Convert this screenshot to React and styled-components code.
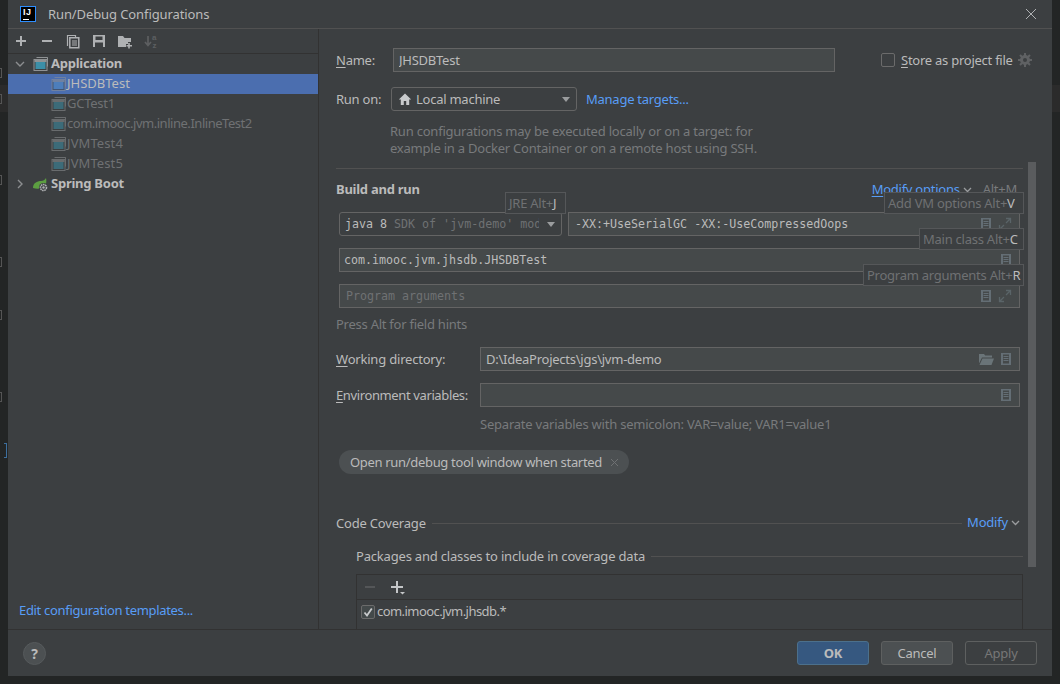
import React from "react";
import styled, { createGlobalStyle } from "styled-components";

const UI = `"Noto Sans", "Open Sans", "Liberation Sans", sans-serif`;
const MONO = `"DejaVu Sans Mono", "Liberation Mono", monospace`;

const Global = createGlobalStyle`
  html, body { margin: 0; padding: 0; background: #232525; overflow: hidden; }
  * { box-sizing: border-box; }
`;

const Screen = styled.div`
  position: relative;
  width: 1060px;
  height: 684px;
  padding: 0 8px 8px;
  background: #232525;
  font: 13px/17px ${UI};
  letter-spacing: -0.25px;
  color: #bbbbbb;
  overflow: hidden;
`;
const CaretLine = styled.i`
  position: absolute;
  left: 0;
  right: 0;
  top: 85px;
  height: 27px;
  background: #2b2b2b;
`;
const GutterMark = styled.i`
  position: absolute;
  left: 0;
  top: ${(p) => p.$top}px;
  width: 2px;
  height: 10px;
  border: 1px solid #555;
  border-left: 0;
`;
const Brace = styled.i`
  position: absolute;
  left: 4px;
  top: 443px;
  width: 3px;
  height: 15px;
  border: 1px solid #3d6f9e;
  border-left: 0;
`;
const Dialog = styled.div`
  position: relative;
  width: 1044px;
  height: 676px;
  display: flex;
  flex-direction: column;
  background: #3c3f41;
`;
const TitleBar = styled.header`
  height: 29px;
  flex: none;
  display: flex;
  align-items: center;
  padding-left: 12px;
  border-bottom: 1px solid #515151;
`;
const Logo = styled.div`
  position: relative;
  width: 16px;
  height: 16px;
  background: #000;
  border: 1px solid #2f8fff;
  color: #fff;
  font: 700 9px/10px "Liberation Sans", sans-serif;
  padding-left: 2px;
  letter-spacing: 0.5px;
  &::after {
    content: "";
    position: absolute;
    left: 2px;
    bottom: 1px;
    width: 6px;
    height: 1px;
    background: #fff;
  }
`;
const Title = styled.div`
  margin-left: 12px;
  color: #bbbbbb;
  letter-spacing: -0.1px;
`;
const CloseBtn = styled.div`
  margin-left: auto;
  margin-right: 15px;
  display: flex;
  color: #afb1b3;
`;
const Main = styled.div`
  flex: 1;
  min-height: 0;
  display: flex;
`;
const Sidebar = styled.aside`
  width: 311px;
  flex: none;
  display: flex;
  flex-direction: column;
  border-right: 1px solid #323232;
`;
const Toolbar = styled.div`
  height: 25px;
  flex: none;
  display: flex;
  align-items: center;
  gap: 10px;
  padding-left: 5px;
  border-bottom: 1px solid #323232;
  color: #afb1b3;
`;
const ToolIcon = styled.span`
  display: flex;
  width: 16px;
  height: 16px;
  color: ${(p) => (p.$off ? "#5d5f61" : p.$bright ? "#c4c6c8" : "#afb1b3")};
`;
const Tree = styled.div`
  flex: 1;
  min-height: 0;
`;
const Node = styled.div`
  height: 20px;
  display: flex;
  align-items: center;
  padding-left: ${(p) => (p.$child ? 43 : 7)}px;
  padding-bottom: 1px;
  background: ${(p) => (p.$selected ? "#4b6eaf" : "transparent")};
  color: ${(p) => (p.$selected ? "#bbbbbb" : p.$child ? "#6f7173" : "#bbbbbb")};
  font-weight: ${(p) => (p.$child ? 400 : 700)};
  letter-spacing: ${(p) => p.$ls ?? -0.25}px;
  white-space: nowrap;
`;
const Twisty = styled.span`
  width: 18px;
  display: flex;
  color: #8c8e90;
`;
const NodeIcon = styled.span`
  width: 16px;
  height: 16px;
  display: flex;
  margin-right: ${(p) => (p.$dim ? 0 : 2)}px;
  opacity: ${(p) => (p.$dim ? 0.55 : 1)};
`;
const Link = styled.span`
  color: #589df6;
`;
const TemplatesLink = styled(Link)`
  padding: 0 0 10px 11px;
  letter-spacing: -0.32px;
`;
const Content = styled.section`
  position: relative;
  flex: 1;
  min-width: 0;
  overflow: hidden;
  padding: 19px 29px 0 17px;
`;
const Thumb = styled.div`
  position: absolute;
  right: 16px;
  top: 133px;
  width: 8px;
  height: 405px;
  background: #5a5c5e;
`;
const Row = styled.div`
  display: flex;
  align-items: center;
  height: 24px;
  margin-top: ${(p) => p.$mt || 0}px;
  margin-left: ${(p) => p.$ml || 0}px;
`;
const Label = styled.label`
  flex: none;
  width: ${(p) => p.$w}px;
  color: #bbbbbb;
  white-space: nowrap;
  letter-spacing: ${(p) => p.$ls ?? -0.25}px;
`;
const Mn = styled.span`
  text-decoration: underline;
  text-underline-offset: 2px;
`;
const Field = styled.div`
  height: 24px;
  display: flex;
  align-items: center;
  gap: 6px;
  flex: ${(p) => (p.$w ? "none" : 1)};
  min-width: 0;
  width: ${(p) => (p.$w ? `${p.$w}px` : "auto")};
  padding: 0 7px 0 ${(p) => p.$pl || 5}px;
  background: #45494a;
  border: 1px solid #646464;
  color: #bbbbbb;
  white-space: nowrap;
`;
const FieldText = styled.span`
  flex: 1;
  min-width: 0;
  overflow: hidden;
  font-family: ${(p) => (p.$mono ? MONO : UI)};
  font-size: ${(p) => (p.$mono ? "11.65px" : "13px")};
  letter-spacing: ${(p) => (p.$mono ? "0" : "-0.25px")};
  padding-top: ${(p) => (p.$mono ? 1 : 0)}px;
  color: ${(p) => (p.$placeholder ? "#6f7173" : "#bbbbbb")};
`;
const Select = styled.div`
  flex: none;
  width: ${(p) => p.$w}px;
  height: 24px;
  display: flex;
  align-items: center;
  padding: 0 6px 0 ${(p) => p.$pl || 6}px;
  background: #3c3f41;
  border: 1px solid #646464;
  border-radius: 3px;
  white-space: nowrap;
  overflow: hidden;
`;
const SelectText = styled.span`
  flex: 1;
  min-width: 0;
  display: flex;
  align-items: center;
  gap: 4px;
  overflow: hidden;
`;
const SelectMono = styled.span`
  flex: 1;
  min-width: 0;
  overflow: hidden;
  padding-top: 1px;
  font-family: ${MONO};
  font-size: 11.65px;
  letter-spacing: 0;
`;
const Muted = styled.span`
  color: #6f7173;
`;
const ArrowDown = styled.span`
  flex: none;
  width: 0;
  height: 0;
  margin-left: 8px;
  border-left: 4px solid transparent;
  border-right: 4px solid transparent;
  border-top: 5px solid #9a9c9e;
`;
const ManageLink = styled(Link)`
  margin-left: 9px;
`;
const Hint = styled.div`
  color: #787a7c;
  margin-top: ${(p) => p.$mt || 0}px;
  margin-left: ${(p) => p.$ml || 0}px;
  letter-spacing: ${(p) => p.$ls ?? -0.22}px;
`;
const Separator = styled.hr`
  margin: 11px 0 0;
  border: 0;
  height: 1px;
  background: #515151;
`;
const Heading = styled.div`
  height: 20px;
  margin-top: 10px;
  display: flex;
  align-items: center;
  font-weight: 700;
  color: #bbbbbb;
`;
const ModifyOptions = styled(Link)`
  margin-left: auto;
  font-weight: 400;
  display: flex;
  align-items: center;
  gap: 3px;
  white-space: pre;
`;
const Shortcut = styled.span`
  margin-left: 11px;
  margin-right: 6px;
  color: #787a7c;
  font-weight: 400;
`;
const FieldsGrid = styled(Row)`
  gap: 6px;
  width: 681px;
`;
const WideField = styled(Field)`
  flex: none;
  width: 540px;
`;
const Chip = styled.div`
  width: 290px;
  height: 24px;
  margin: 17px 0 0 3px;
  padding: 0 10px 0 11px;
  display: flex;
  align-items: center;
  justify-content: space-between;
  background: #4c5052;
  border-radius: 12px;
  color: #bbbbbb;
  white-space: nowrap;
  letter-spacing: -0.32px;
`;
const GroupTitle = styled.div`
  height: 18px;
  display: flex;
  align-items: center;
  gap: 6px;
  margin-top: ${(p) => p.$mt}px;
  margin-left: ${(p) => p.$ml || 0}px;
  white-space: nowrap;
  letter-spacing: -0.19px;
`;
const GroupLine = styled.span`
  flex: 1;
  height: 1px;
  background: #515151;
`;
const ModifyLink = styled(Link)`
  display: flex;
  align-items: center;
  gap: 3px;
  margin-right: 3px;
  margin-left: -1px;
  margin-top: -1px;
`;
const Table = styled.div`
  margin: 9px 0 0 20px;
  height: 120px;
  border: 1px solid #323232;
`;
const TableBar = styled.div`
  height: 25px;
  display: flex;
  align-items: center;
  gap: 11px;
  padding-left: 5px;
  border-bottom: 1px solid #323232;
`;
const TableRow = styled.div`
  height: 23px;
  display: flex;
  align-items: center;
  gap: 2px;
  padding-left: 4px;
  letter-spacing: -0.55px;
`;
const CheckBox = styled.span`
  width: 14px;
  height: 14px;
  flex: none;
  display: flex;
  align-items: center;
  justify-content: center;
  background: ${(p) => (p.$checked ? "#43494a" : "#3c3f41")};
  border: 1px solid #6b6b6b;
  border-radius: 2px;
`;
const StoreCheck = styled(CheckBox)`
  margin-left: 46px;
  margin-right: 6px;
`;
const StoreText = styled.span`
  flex: none;
  white-space: nowrap;
`;
const Gear = styled.span`
  display: flex;
  flex: none;
  margin-left: 5px;
  color: #5f6163;
`;
const KeyTip = styled.div`
  position: absolute;
  z-index: 3;
  left: ${(p) => p.$left}px;
  top: ${(p) => p.$top}px;
  width: ${(p) => p.$w}px;
  height: 22px;
  padding-left: 3px;
  line-height: 20px;
  background: #3c3f41;
  border: 1px solid #555759;
  color: #6f7173;
  white-space: nowrap;
  overflow: hidden;
`;
const KeyLetter = styled.span`
  color: #bbbbbb;
`;
const Footer = styled.footer`
  height: 47px;
  flex: none;
  display: flex;
  align-items: center;
  padding: 0 15px 0 15px;
  border-top: 1px solid #323232;
`;
const HelpBtn = styled.div`
  width: 23px;
  height: 23px;
  display: flex;
  align-items: center;
  justify-content: center;
  border-radius: 50%;
  background: #4c5052;
  border: 1px solid #565a5c;
  color: #bbbbbb;
  font-weight: 700;
  font-size: 14px;
`;
const Buttons = styled.div`
  margin-left: auto;
  display: flex;
  gap: 12px;
`;
const Button = styled.div`
  width: 72px;
  height: 24px;
  display: flex;
  align-items: center;
  justify-content: center;
  border-radius: 3px;
  border: 1px solid ${(p) => (p.$primary ? "#4c708c" : "#5e6060")};
  background: ${(p) => (p.$primary ? "#365880" : p.$disabled ? "transparent" : "#4c5052")};
  color: ${(p) => (p.$disabled ? "#777777" : "#bbbbbb")};
  font-weight: ${(p) => (p.$primary ? 700 : 400)};
`;

const Plus = () => (
  <svg width="16" height="16" viewBox="0 0 16 16"><path d="M8 3v10M3 8h10" stroke="currentColor" strokeWidth="2" /></svg>
);
const Minus = ({ w = 2 }) => (
  <svg width="16" height="16" viewBox="0 0 16 16"><path d="M3 8h10" stroke="currentColor" strokeWidth={w} /></svg>
);
const Copy = () => (
  <svg width="16" height="16" viewBox="0 0 16 16" fill="none" stroke="currentColor">
    <path d="M3 12.5h-.5v-10h8V5" strokeWidth="1.2" />
    <path d="M4.8 4.8h9v10h-9z" strokeWidth="1.5" />
    <path d="M7 8h5M7 10h5M7 12h5" strokeWidth="1.1" />
  </svg>
);
const Save = () => (
  <svg width="16" height="16" viewBox="0 0 16 16">
    <path fillRule="evenodd" fill="currentColor" d="M2 2h12v12H2zM4.5 3.5v3.5h7V3.5zM4 9.5V14h8V9.5z" />
  </svg>
);
const FolderPlus = () => (
  <svg width="16" height="16" viewBox="0 0 16 16">
    <path fill="currentColor" d="M1 3h5l1.5 2H14v4h-3v2H9v3H1z" />
    <path d="M12 10v5.5M9.5 12.7h5.5" stroke="currentColor" strokeWidth="1.6" />
  </svg>
);
const Sort = () => (
  <svg width="16" height="16" viewBox="0 0 16 16">
    <path d="M5 3v9M2 9l3 3.5L8 9" stroke="currentColor" strokeWidth="1.7" fill="none" />
    <text x="9" y="7" fontSize="8" fontWeight="700" fontFamily="Liberation Sans" fill="currentColor">a</text>
    <text x="9.5" y="15" fontSize="8" fontWeight="700" fontFamily="Liberation Sans" fill="currentColor">z</text>
  </svg>
);
const Chev = ({ open }) => (
  <svg width="10" height="10" viewBox="0 0 10 10" fill="none" stroke="currentColor" strokeWidth="1.4">
    {open ? <path d="M1 3l4 4 4-4" /> : <path d="M3 1l4 4-4 4" />}
  </svg>
);
const SmallChev = () => (
  <svg width="9" height="9" viewBox="0 0 9 9" fill="none" stroke="#9a9c9e" strokeWidth="1.3"><path d="M1 3l3.5 3.5L8 3" /></svg>
);
const AppIcon = ({ selected }) => (
  <svg width="16" height="16" viewBox="0 0 16 16">
    <path d="M3.5 1.5h11v2" fill="none" stroke="#8f9294" />
    <path d="M14.5 1.5v9" stroke="#8f9294" />
    <rect x="1" y="3.5" width="13" height="11" fill="#3c3f41" stroke="#8f9294" />
    <rect x="2.5" y="6" width="10" height="7" fill={selected ? "#4f8cc5" : "#3c8fa8"} />
    <rect x="1.5" y="4" width="12" height="2" fill="#8f9294" />
  </svg>
);
const Spring = () => (
  <svg width="16" height="16" viewBox="0 0 16 16">
    <path fill="#5c9e41" d="M0 12C0 7 4 5 8 5c2 0 4-1 5-3 1 4 0 9-4 10-3 1-6 1-9 0z" />
    <circle cx="10.5" cy="11.5" r="4.5" fill="#3c3f41" />
    <circle cx="10.5" cy="11.5" r="3" fill="none" stroke="#afb1b3" strokeWidth="1.6" strokeDasharray="1.6 .6" />
    <circle cx="10.5" cy="11.5" r="1.2" fill="#afb1b3" />
  </svg>
);
const House = () => (
  <svg width="14" height="14" viewBox="0 0 14 14"><path fill="#c8cacc" d="M7 1.5L.8 7.5h2V13h3V9h2.4v4h3V7.5h2z" /></svg>
);
const Doc = () => (
  <svg width="12" height="14" viewBox="0 0 12 14" style={{ flex: "none" }}>
    <path fillRule="evenodd" fill="#646e75" d="M1 1h10v12H1zM3 2.5v9h6v-9z" />
    <path d="M3.5 4.5h5M3.5 6.5h5M3.5 8.5h5" stroke="#646e75" />
  </svg>
);
const Expand = () => (
  <svg width="14" height="14" viewBox="0 0 14 14" style={{ flex: "none" }} fill="none" stroke="#5a6468" strokeWidth="1.3">
    <path d="M8 1.5h4.5V6M12.5 1.5L8 6M6 12.5H1.5V8M1.5 12.5L6 8" />
  </svg>
);
const FolderOpen = () => (
  <svg width="16" height="14" viewBox="0 0 16 14" style={{ flex: "none" }}>
    <path fill="#6a7478" d="M1 2h5l1.2 1.5H14v2H4L1 11.5z" />
    <path fill="#6a7478" d="M4.5 6.5H16l-2.5 6.5H1.5z" />
  </svg>
);

const tree = [
  { name: "GCTest1", ls: -0.25 },
  { name: "com.imooc.jvm.inline.InlineTest2", ls: -0.47 },
  { name: "JVMTest4", ls: 0.1 },
  { name: "JVMTest5", ls: 0.1 },
];

export default function App() {
  return (
    <Screen>
      <Global />
      <CaretLine />
      <GutterMark $top={68} />
      <GutterMark $top={94} />
      <GutterMark $top={175} />
      <GutterMark $top={257} />
      <GutterMark $top={310} />
      <GutterMark $top={392} />
      <Brace />
      <Dialog>
        <TitleBar>
          <Logo>IJ</Logo>
          <Title>Run/Debug Configurations</Title>
          <CloseBtn>
            <svg width="12" height="12" viewBox="0 0 12 12" stroke="currentColor" strokeWidth="1"><path d="M1 1l10 10M11 1L1 11" /></svg>
          </CloseBtn>
        </TitleBar>
        <Main>
          <Sidebar>
            <Toolbar>
              <ToolIcon><Plus /></ToolIcon>
              <ToolIcon><Minus /></ToolIcon>
              <ToolIcon><Copy /></ToolIcon>
              <ToolIcon><Save /></ToolIcon>
              <ToolIcon><FolderPlus /></ToolIcon>
              <ToolIcon $off><Sort /></ToolIcon>
            </Toolbar>
            <Tree>
              <Node>
                <Twisty><Chev open /></Twisty>
                <NodeIcon><AppIcon /></NodeIcon>
                Application
              </Node>
              <Node $child $selected $ls={0}>
                <NodeIcon $dim><AppIcon selected /></NodeIcon>
                JHSDBTest
              </Node>
              {tree.map((t) => (
                <Node $child $ls={t.ls} key={t.name}>
                  <NodeIcon $dim><AppIcon /></NodeIcon>
                  {t.name}
                </Node>
              ))}
              <Node>
                <Twisty><Chev /></Twisty>
                <NodeIcon><Spring /></NodeIcon>
                Spring Boot
              </Node>
            </Tree>
            <TemplatesLink>Edit configuration templates...</TemplatesLink>
          </Sidebar>
          <Content>
            <Row>
              <Label $w={57}><Mn>N</Mn>ame:</Label>
              <Field $w={442}><FieldText>JHSDBTest</FieldText></Field>
              <StoreCheck />
              <StoreText><Mn>S</Mn>tore as project file</StoreText>
              <Gear>
                <svg width="14" height="14" viewBox="0 0 14 14">
                  <circle cx="7" cy="7" r="3.5" fill="none" stroke="currentColor" strokeWidth="3" />
                  <path d="M7 0v3M7 11v3M0 7h3M11 7h3M2 2l2 2M10 10l2 2M12 2l-2 2M4 10l-2 2" stroke="currentColor" strokeWidth="2" />
                </svg>
              </Gear>
            </Row>
            <Row $mt={15}>
              <Label $w={55}>Run on:</Label>
              <Select $w={186}>
                <SelectText><House /> Local machine</SelectText>
                <ArrowDown />
              </Select>
              <ManageLink>Manage targets...</ManageLink>
            </Row>
            <Hint $mt={12} $ml={54}>
              Run configurations may be executed locally or on a target: for<br />
              example in a Docker Container or on a remote host using SSH.
            </Hint>
            <Separator />
            <Heading>
              Build and run
              <ModifyOptions><span><Mn>M</Mn>odify options</span> <SmallChev /></ModifyOptions>
              <Shortcut>Alt+M</Shortcut>
            </Heading>
            <FieldsGrid $mt={13} $ml={3}>
              <Select $w={223} $pl={5}>
                <SelectMono>java 8 <Muted>SDK of 'jvm-demo' module</Muted></SelectMono>
                <ArrowDown />
              </Select>
              <Field $pl={6}>
                <FieldText $mono>-XX:+UseSerialGC -XX:-UseCompressedOops</FieldText>
                <Doc /><Expand />
              </Field>
            </FieldsGrid>
            <FieldsGrid $mt={12} $ml={3}>
              <Field $pl={4}>
                <FieldText $mono>com.imooc.jvm.jhsdb.JHSDBTest</FieldText>
                <Doc />
              </Field>
            </FieldsGrid>
            <FieldsGrid $mt={12} $ml={3}>
              <Field $pl={6}>
                <FieldText $mono $placeholder>Program arguments</FieldText>
                <Doc /><Expand />
              </Field>
            </FieldsGrid>
            <Hint $mt={8} $ls={-0.25}>Press Alt for field hints</Hint>
            <Row $mt={14}>
              <Label $w={144} $ls={-0.2}><Mn>W</Mn>orking directory:</Label>
              <WideField>
                <FieldText>D:\IdeaProjects\jgs\jvm-demo</FieldText>
                <FolderOpen /><Doc />
              </WideField>
            </Row>
            <Row $mt={12}>
              <Label $w={144} $ls={-0.38}><Mn>E</Mn>nvironment variables:</Label>
              <WideField>
                <FieldText />
                <Doc />
              </WideField>
            </Row>
            <Hint $mt={9} $ml={144}>Separate variables with semicolon: VAR=value; VAR1=value1</Hint>
            <Chip>
              Open run/debug tool window when started
              <svg width="9" height="9" viewBox="0 0 9 9" stroke="#6f7173"><path d="M1 1l7 7M8 1L1 8" /></svg>
            </Chip>
            <GroupTitle $mt={40}>
              <span>Code Coverage</span>
              <GroupLine />
              <ModifyLink>Modify <SmallChev /></ModifyLink>
            </GroupTitle>
            <GroupTitle $mt={15} $ml={20}>
              <span>Packages and classes to include in coverage data</span>
              <GroupLine />
            </GroupTitle>
            <Table>
              <TableBar>
                <ToolIcon $off><Minus w={1.5} /></ToolIcon>
                <ToolIcon $bright>
                  <svg width="16" height="16" viewBox="0 0 16 16" fill="currentColor">
                    <path d="M7 2h2v5h5v2H9v5H7V9H2V7h5z" />
                    <path d="M11 13h5l-2.5 2.5z" />
                  </svg>
                </ToolIcon>
              </TableBar>
              <TableRow>
                <CheckBox $checked>
                  <svg width="10" height="10" viewBox="0 0 10 10" fill="none" stroke="#c8cacc" strokeWidth="1.8"><path d="M1.5 5.5L4 8.5 8.8 1.5" /></svg>
                </CheckBox>
                com.imooc.jvm.jhsdb.*
              </TableRow>
            </Table>
            <Thumb />
            <KeyTip $left={186} $top={163} $w={61}>JRE Alt+<KeyLetter>J</KeyLetter></KeyTip>
            <KeyTip $left={565} $top={163} $w={140}>Add VM options Alt+<KeyLetter>V</KeyLetter></KeyTip>
            <KeyTip $left={600} $top={199} $w={105}>Main class Alt+<KeyLetter>C</KeyLetter></KeyTip>
            <KeyTip $left={544} $top={235} $w={161}>Program arguments Alt+<KeyLetter>R</KeyLetter></KeyTip>
          </Content>
        </Main>
        <Footer>
          <HelpBtn>?</HelpBtn>
          <Buttons>
            <Button $primary>OK</Button>
            <Button>Cancel</Button>
            <Button $disabled>Apply</Button>
          </Buttons>
        </Footer>
      </Dialog>
    </Screen>
  );
}
